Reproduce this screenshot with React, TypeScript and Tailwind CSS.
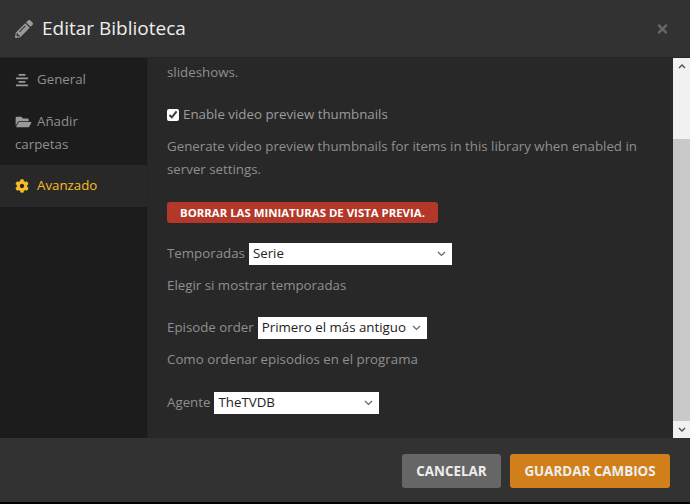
import { FaAlignCenter, FaCog, FaFolderOpen, FaPencilAlt, FaTimes } from 'react-icons/fa';

function Hint({ children, className }: { children: React.ReactNode; className: string }) {
  return <p className={`text-[13.3px] leading-[23px] text-[#8f8f8f] ${className}`}>{children}</p>;
}

function Select({ value, width }: { value: string; width: string }) {
  return (
    <span className={`relative inline-block h-[22px] bg-white ${width}`}>
      <span className="block pl-[4px] text-[13.3px] leading-[21px] text-[#222]">{value}</span>
      <svg className="absolute right-[6px] top-[8px] h-[6px] w-[9px]" viewBox="0 0 9 6" fill="none" stroke="#666" strokeWidth="1.2">
        <path d="M1 1l3.5 3.5L8 1" />
      </svg>
    </span>
  );
}

export default function App() {
  return (
    <div className="flex h-[504px] w-[690px] flex-col overflow-hidden bg-black font-['Open_Sans',sans-serif]">
      {/* Header */}
      <header className="flex h-[58px] shrink-0 items-center justify-between border-b border-[#262626] bg-[#323232] pl-[15px] pr-[21px]">
        <div className="flex items-center gap-[9px]">
          <FaPencilAlt className="h-[18px] w-[18px] text-[#9a9a9a]" />
          <h1 className="text-[19px] text-[#eeeeee]">Editar Biblioteca</h1>
        </div>
        <FaTimes className="h-[14px] w-[13px] text-[#666666]" />
      </header>

      {/* Body */}
      <div className="flex h-[380px] shrink-0">
        <nav className="w-[148px] shrink-0 border-r border-[#242424] bg-[#1c1c1c] text-[13.3px] text-[#8f8f8f]">
          <div className="flex h-[43px] items-center gap-[8px] pl-[15px]">
            <FaAlignCenter className="h-[14px] w-[14px] text-[#999999]" />
            <span>General</span>
          </div>
          <div className="h-[64px] pl-[15px] pt-[9px] leading-[23px]">
            <FaFolderOpen className="mr-[5px] inline-block h-[14px] w-[17px] text-[#999999]" />
            Añadir
            <br />
            carpetas
          </div>
          <div className="flex h-[42px] items-center gap-[8px] bg-[#282828] pl-[15px] text-[#f8bd24]">
            <FaCog className="h-[14px] w-[14px]" />
            <span>Avanzado</span>
          </div>
        </nav>

        <main className="flex-1 bg-[#282828] pl-[19px] pr-[20px] pt-[3px]">
          <Hint className="">slideshows.</Hint>
          <label className="mt-[19px] flex h-[24px] items-center gap-[4px] text-[13.3px] text-[#9c9c9c]">
            <input type="checkbox" defaultChecked className="h-[12px] w-[12px] accent-white" />
            Enable video preview thumbnails
          </label>
          <Hint className="mt-[8px]">
            Generate video preview thumbnails for items in this library when enabled in server settings.
          </Hint>
          <button className="mt-[21px] block h-[21px] w-[271px] rounded-[3px] bg-[#b3382a] text-[11.4px] font-bold text-white">
            BORRAR LAS MINIATURAS DE VISTA PREVIA.
          </button>
          <div className="mt-[20px] flex items-center gap-[4px] text-[13.3px] text-[#8f8f8f]">
            Temporadas <Select value="Serie" width="w-[203px]" />
          </div>
          <Hint className="mt-[9px]">Elegir si mostrar temporadas</Hint>
          <div className="mt-[20px] flex items-center gap-[4px] text-[13.3px] text-[#8f8f8f]">
            Episode order <Select value="Primero el más antiguo" width="w-[169px]" />
          </div>
          <Hint className="mt-[9px]">Como ordenar episodios en el programa</Hint>
          <div className="mt-[21px] flex items-center gap-[4px] text-[13.3px] text-[#8f8f8f]">
            Agente <Select value="TheTVDB" width="w-[165px]" />
          </div>
        </main>

        {/* Scrollbar */}
        <div className="flex w-[17px] shrink-0 flex-col bg-[#f1f1f1]">
          <div className="flex h-[17px] items-center justify-center">
            <svg className="h-[5px] w-[8px]" viewBox="0 0 8 5" fill="none" stroke="#505050" strokeWidth="1.4">
              <path d="M1 4l3-3 3 3" />
            </svg>
          </div>
          <div className="mt-[64px] h-[282px] bg-[#c9c9c9]" />
          <div className="mt-auto flex h-[17px] items-center justify-center">
            <svg className="h-[5px] w-[8px]" viewBox="0 0 8 5" fill="none" stroke="#505050" strokeWidth="1.4">
              <path d="M1 1l3 3 3-3" />
            </svg>
          </div>
        </div>
      </div>

      {/* Footer */}
      <footer className="flex h-[64px] shrink-0 items-center justify-end gap-[9px] bg-[#323232] pr-[20px] pt-[2px]">
        <button className="h-[34px] w-[99px] rounded-[3px] bg-[#666666] text-[13.4px] font-bold text-[#eeeeee]">CANCELAR</button>
        <button className="h-[34px] w-[160px] rounded-[3px] bg-[#d17f1a] text-[13.4px] font-bold text-[#eeeeee]">GUARDAR CAMBIOS</button>
      </footer>
    </div>
  );
}
